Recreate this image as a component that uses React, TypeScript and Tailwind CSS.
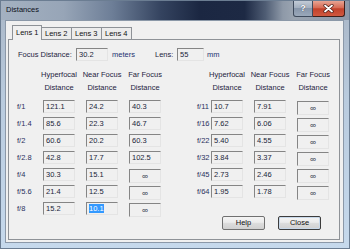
import React from "react";

const boxBase =
  "w-[32px] h-[13px] shrink-0 bg-[#f0f0f0] border border-t-[#858585] border-l-[#858585] border-r-[#e4e4e4] border-b-[#e4e4e4] text-[7.5px] leading-[11px] pl-[2px] text-[#1a1f3a] whitespace-nowrap overflow-hidden";
const infBox =
  "w-[32px] h-[14px] mt-[1px] shrink-0 bg-[#f0f0f0] border border-t-[#858585] border-l-[#858585] border-r-[#e4e4e4] border-b-[#e4e4e4] text-[8.5px] leading-[13px] text-center text-[#1a1f3a]";

function Cell({ v, sel }: { v: string; sel?: boolean }) {
  if (v === "inf") return <div className={infBox}>∞</div>;
  return (
    <div className={boxBase}>
      {sel ? <span className="bg-[#3399ff] text-white">{v}</span> : v}
    </div>
  );
}

function Row({ f, a, b, c, lw, sel }: { f: string; a: string; b: string; c: string; lw: string; sel?: boolean }) {
  return (
    <div className="flex items-start h-[17px]">
      <div className={`${lw} h-[13px] leading-[13px] text-[7.5px] text-[#2a3160] whitespace-nowrap`}>{f}</div>
      <Cell v={a} />
      <div className="ml-[11px]">
        <Cell v={b} sel={sel} />
      </div>
      <div className="ml-[11px]">
        <Cell v={c} />
      </div>
    </div>
  );
}

function Headers({ lw }: { lw: string }) {
  const h = (t1: string, t2: string, extra: string) => (
    <div className={`w-[32px] flex flex-col items-center whitespace-nowrap text-[7.5px] leading-[13px] text-[#1e2340] ${extra}`}>
      <span>{t1}</span>
      <span>{t2}</span>
    </div>
  );
  return (
    <div className="flex h-[26px]">
      <div className={lw} />
      {h("Hyperfocal", "Distance", "")}
      {h("Near Focus", "Distance", "ml-[11px]")}
      {h("Far Focus", "Distance", "ml-[11px]")}
    </div>
  );
}

export default function App() {
  const left = [
    ["f/1", "121.1", "24.2", "40.3"],
    ["f/1.4", "85.6", "22.3", "46.7"],
    ["f/2", "60.6", "20.2", "60.3"],
    ["f/2.8", "42.8", "17.7", "102.5"],
    ["f/4", "30.3", "15.1", "inf"],
    ["f/5.6", "21.4", "12.5", "inf"],
    ["f/8", "15.2", "10.1", "inf"],
  ];
  const right = [
    ["f/11", "10.7", "7.91", "inf"],
    ["f/16", "7.62", "6.06", "inf"],
    ["f/22", "5.40", "4.55", "inf"],
    ["f/32", "3.84", "3.37", "inf"],
    ["f/45", "2.73", "2.46", "inf"],
    ["f/64", "1.95", "1.78", "inf"],
  ];
  return (
    <div className="w-[350px] h-[249px] overflow-hidden bg-[linear-gradient(180deg,#a9b6c6_0%,#b9cbde_40%,#c6d9ec_100%)] border border-[#6b7d92] font-['Liberation_Sans',Arial,sans-serif] flex flex-col">
      {/* Title bar */}
      <div className="h-[19px] shrink-0 flex items-start bg-[linear-gradient(90deg,#a4b1c1_0%,#97a5b7_18%,#6d7e97_32%,#34435f_46%,#1b2742_57%,#1d2944_70%,#4f5d74_76%,#8e99a8_81%,#9aa4b1_84%,#8d98a8_100%)]">
        <div className="pl-[5px] pt-[4px] text-[7.5px] leading-[10px] text-[#0c0f1a]">Distances</div>
        <div className="ml-auto mr-[4px] flex">
          <div className="w-[20px] h-[16px] rounded-bl-[3px] border border-t-0 border-[#3e4a5c] bg-[linear-gradient(180deg,#c2cbd6_0%,#a3afbf_45%,#8796aa_50%,#9aa8ba_100%)] flex items-center justify-center text-white text-[9px] font-bold leading-none [text-shadow:0_0_1px_#1f2a3a]">
            ?
          </div>
          <div className="w-[32px] h-[16px] rounded-br-[3px] border border-t-0 border-l-0 border-[#3e1f1a] bg-[linear-gradient(180deg,#e7a493_0%,#d66b55_45%,#c2412a_52%,#d0583f_100%)] flex items-center justify-center">
            <svg width="11" height="9" viewBox="0 0 11 9">
              <path d="M2 1.5 L9 7.5 M9 1.5 L2 7.5" stroke="#4a1a12" strokeWidth="3.2" strokeLinecap="round" />
              <path d="M2 1.5 L9 7.5 M9 1.5 L2 7.5" stroke="#ffffff" strokeWidth="1.8" strokeLinecap="round" />
            </svg>
          </div>
        </div>
      </div>

      {/* Client area */}
      <div className="ml-[4px] w-[339px] h-[223px] shrink-0 bg-[#f0f0f0] border border-[#8b98a8] pt-[4px]">
        {/* Tabs */}
        <div className="flex items-end h-[14px] ml-[6px] relative z-10">
          <div className="w-[30px] h-[15px] mb-[-1px] bg-[#f0f0f0] border border-b-0 border-[#8e9297] text-[7.5px] leading-[14px] pl-[3px] text-[#111]">
            Lens 1
          </div>
          {["Lens 2", "Lens 3", "Lens 4"].map((t) => (
            <div
              key={t}
              className="w-[30px] h-[12px] bg-[#ececec] border border-b-0 border-l-0 border-[#8e9297] text-[7.5px] leading-[12px] pl-[3px] text-[#111]"
            >
              {t}
            </div>
          ))}
        </div>

        {/* Panel */}
        <div className="ml-[2px] w-[332px] h-[201px] border border-[#8e9297] pl-[8px] pt-[8px] text-[#1e2340]">
          {/* Focus row */}
          <div className="flex items-start h-[13px] ml-[1px] text-[7.5px]">
            <div className="w-[58px] leading-[13px] whitespace-nowrap">Focus Distance:</div>
            <div className={boxBase}>30.2</div>
            <div className="w-[43px] ml-[4px] leading-[13px] text-[#243070]">meters</div>
            <div className="w-[22px] leading-[13px]">Lens:</div>
            <div className={`${boxBase} !w-[27px]`}>55</div>
            <div className="ml-[3px] leading-[13px] text-[#243070]">mm</div>
          </div>

          <div className="flex mt-[7px]">
            {/* Left group */}
            <div className="flex flex-col">
              <Headers lw="w-[26px]" />
              <div className="mt-[6px]">
                {left.map((r, i) => (
                  <Row key={r[0]} f={r[0]} a={r[1]} b={r[2]} c={r[3]} lw="w-[26px]" sel={i === 6} />
                ))}
              </div>
            </div>
            {/* Right group */}
            <div className="flex flex-col ml-[36px]">
              <Headers lw="w-[14px]" />
              <div className="mt-[6px]">
                {right.map((r) => (
                  <Row key={r[0]} f={r[0]} a={r[1]} b={r[2]} c={r[3]} lw="w-[14px]" />
                ))}
              </div>
              <div className="flex mt-[14px] ml-[25px] gap-[13px]">
                <div className="w-[43px] h-[14px] rounded-[2px] border border-[#707070] bg-[linear-gradient(180deg,#f4f4f4_0%,#ebebeb_45%,#dddddd_50%,#d0d0d0_100%)] text-[7.5px] leading-[12px] text-center text-[#111]">
                  Help
                </div>
                <div className="w-[43px] h-[14px] rounded-[2px] border border-[#3c3c3c] bg-[linear-gradient(180deg,#f4f4f4_0%,#ebebeb_45%,#dddddd_50%,#d0d0d0_100%)] shadow-[inset_0_0_0_1px_#c9d9ea] text-[7.5px] leading-[12px] text-center text-[#111]">
                  Close
                </div>
              </div>
            </div>
          </div>
        </div>
      </div>
    </div>
  );
}
